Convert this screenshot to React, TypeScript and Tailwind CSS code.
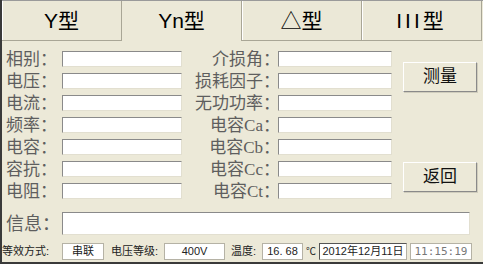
const cjk = "font-['Liberation_Sans','Noto_Sans_CJK_SC',sans-serif]";
const serif = "font-['Liberation_Serif','Noto_Sans_CJK_SC',serif]";

const leftRows = ["相别", "电压", "电流", "频率", "电容", "容抗", "电阻"];
const rightRows = ["介损角", "损耗因子", "无功功率", "电容Ca", "电容Cb", "电容Cc", "电容Ct"];
const tabs = ["Y型", "Yn型", "△型", "III型"];

function Field({ w }: { w: string }) {
  return (
    <div
      className={`h-[16px] ${w} bg-white border border-t-[#8a8a8a] border-l-[#8a8a8a] border-b-[#e2dfd0] border-r-[#e2dfd0]`}
    />
  );
}

function Btn({ label }: { label: string }) {
  return (
    <button className="h-[30px] w-[74px] bg-[#ece9d8] border border-t-white border-l-white border-b-[#8a8a8a] border-r-[#8a8a8a] shadow-[1px_1px_0_#d0cdbd] text-[17px] text-[#111]">
      {label}
    </button>
  );
}

function Box({ w, children, className = "" }: { w: string; children?: React.ReactNode; className?: string }) {
  return (
    <div
      className={`h-[17px] ${w} shrink-0 whitespace-nowrap overflow-hidden bg-white border border-[#b5b2a5] flex items-center justify-center text-[11px] leading-none ${className}`}
    >
      {children}
    </div>
  );
}

export default function App() {
  return (
    <div className={`w-[483px] h-[267px] bg-white ${cjk}`}>
      <div className="h-[264px] bg-[#ece9d8] border-l-2 border-l-[#3a3a3a] border-b-2 border-b-[#3a3a3a] flex flex-col">
        <div className="flex h-[41px] border-t border-t-[#9a9a9a]">
          {tabs.map((t, i) => (
            <div
              key={t}
              className={`flex w-[120px] items-center justify-center text-[21px] text-black ${
                i === 3 ? "tracking-[3px]" : ""
              } ${
                i === 1
                  ? "border-r border-r-[#a9a696]"
                  : "border-b border-b-[#a9a696] border-r border-r-[#a9a696] bg-[#ebe8d7] shadow-[inset_1px_0_0_#ffffff]"
              }`}
            >
              {t}
            </div>
          ))}
        </div>

        <div className="flex pt-[7px]">
          <div className="flex flex-col pl-[4px]">
            {leftRows.map((r) => (
              <div key={r} className="h-[22px] flex items-center">
                <span className={`w-[56px] text-[17px] text-[#5e5e5e] leading-none whitespace-nowrap ${serif}`}>{r}：</span>
                <Field w="w-[120px]" />
              </div>
            ))}
          </div>
          <div className="flex flex-col">
            {rightRows.map((r) => (
              <div key={r} className="h-[22px] flex items-center">
                <span className={`w-[98px] text-right text-[17px] text-[#5e5e5e] leading-none whitespace-nowrap -mr-[2px] ${serif}`}>
                  {r}：
                </span>
                <Field w="w-[114px]" />
              </div>
            ))}
          </div>
          <div className="flex flex-col pl-[11px] pt-[14px] gap-[70px]">
            <Btn label="测量" />
            <Btn label="返回" />
          </div>
        </div>

        <div className="flex items-center pl-[4px] mt-[10px]">
          <span className={`w-[56px] text-[18px] text-[#5e5e5e] leading-none whitespace-nowrap ${serif}`}>信息：</span>
          <div className="h-[23px] w-[408px] bg-white border border-t-[#8a8a8a] border-l-[#8a8a8a] border-b-[#e2dfd0] border-r-[#e2dfd0]" />
        </div>

        <div className="flex items-center mt-[8px] text-[11px] text-[#222] whitespace-nowrap">
          <span className="w-[60px]">等效方式:</span>
          <Box w="w-[42px]">串联</Box>
          <span className="ml-[7px] w-[53px]">电压等级:</span>
          <Box w="w-[61px]">400V</Box>
          <span className="ml-[6px] w-[31px]">温度:</span>
          <Box w="w-[41px]">16. 68</Box>
          <span className="w-[16px] text-[10px] text-center">℃</span>
          <Box w="w-[88px]" className="border-t-[#555] border-l-[#555] text-[11px]">2012年12月11日</Box>
          <Box w="w-[62px]" className="ml-[3px] text-[#777] font-['DejaVu_Sans_Mono',monospace] text-[10px]">11:15:19</Box>
        </div>
      </div>
    </div>
  );
}
